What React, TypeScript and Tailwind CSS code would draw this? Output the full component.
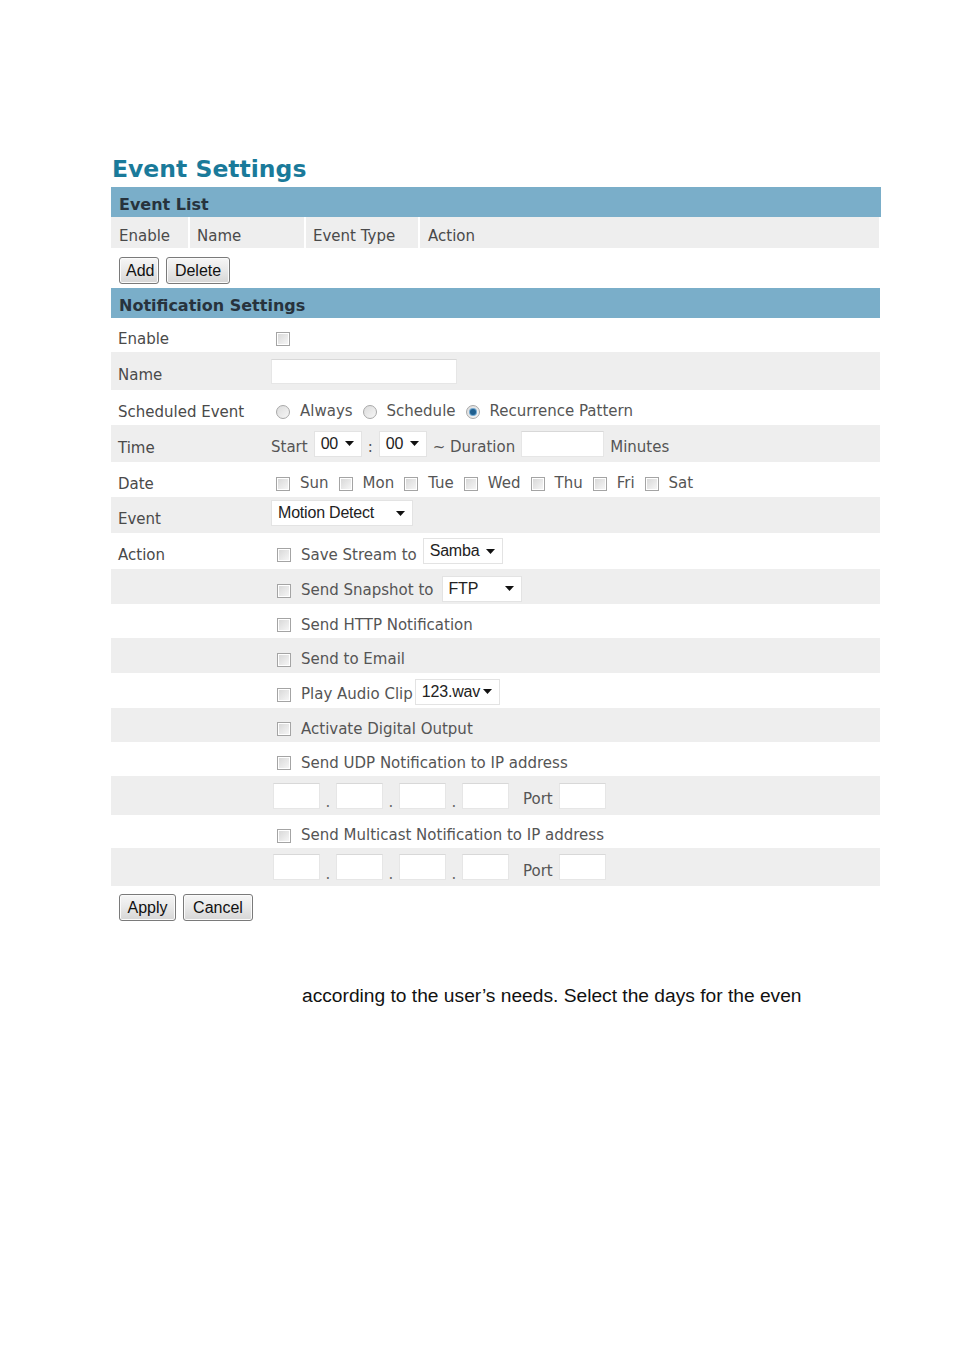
import React from "react"

const ui = "font-['DejaVu_Sans',Verdana,sans-serif]"
const arial = "font-['Liberation_Sans',Arial,sans-serif]"

function Checkbox({ className = "" }: { className?: string }) {
    return (
        <span
            className={`inline-block w-[14px] h-[14px] border border-[#a4a4a4] bg-gradient-to-br from-[#d6d6d6] to-[#f8f8f8] shadow-[inset_0_0_0_1px_#fff] shrink-0 ${className}`}
        />
    )
}

function Radio({ checked = false }: { checked?: boolean }) {
    return (
        <span className="inline-flex items-center justify-center w-[14px] h-[14px] rounded-full border border-[#a8a8a8] bg-gradient-to-br from-[#dcdcdc] to-[#f6f6f6] shrink-0">
            {checked && <span className="w-[6px] h-[6px] rounded-full bg-[#1f5f8f] shadow-[0_0_0_1px_#6fa7d0]" />}
        </span>
    )
}

function Select({ value, width }: { value: string; width: string }) {
    return (
        <span
            className={`inline-flex items-center justify-between h-[26px] pl-[6px] pr-[7px] bg-white border border-[#e3e3e3] ${arial} text-[16px] tracking-[-0.2px] text-[#222] ${width}`}
        >
            <span>{value}</span>
            <svg width="9" height="5" viewBox="0 0 9 5" className="shrink-0">
                <path d="M0 0h9L4.5 5z" fill="#111" />
            </svg>
        </span>
    )
}

function TextBox({ className = "" }: { className?: string }) {
    return <span className={`inline-block bg-white border border-[#e6e6e6] border-t-[#d8d8d8] ${className}`} />
}

function Button({ children, className = "" }: { children: React.ReactNode; className?: string }) {
    return (
        <button
            className={`h-[27px] px-[6px] rounded-[3px] border border-[#7a7a7a] bg-gradient-to-b from-[#f6f6f6] via-[#e8e8e8] to-[#d6d6d6] ${arial} text-[16px] text-[#111] leading-none shadow-[inset_0_0_0_1px_#fbfbfb] ${className}`}
        >
            {children}
        </button>
    )
}

function Row({
    label,
    gray,
    h,
    children,
}: {
    label?: string
    gray?: boolean
    h: string
    children?: React.ReactNode
}) {
    return (
        <div className={`flex items-center ${h} ${gray ? "bg-[#eeeeee]" : "bg-white"}`}>
            <div className="w-[160px] pl-[7px] pt-[9px] text-[#4a4a4a] shrink-0">{label}</div>
            <div className="flex items-center pt-[8px] text-[#555]">{children}</div>
        </div>
    )
}

function IpRow({ h }: { h: string }) {
    return (
        <Row gray h={h}>
            <div className="flex items-center pl-[2px]">
                <TextBox className="w-[47px] h-[26px] -mt-[8px]" />
                <span className="w-[16px] text-center pt-[6px] text-[#666]">.</span>
                <TextBox className="w-[47px] h-[26px] -mt-[8px]" />
                <span className="w-[16px] text-center pt-[6px] text-[#666]">.</span>
                <TextBox className="w-[47px] h-[26px] -mt-[8px]" />
                <span className="w-[16px] text-center pt-[6px] text-[#666]">.</span>
                <TextBox className="w-[47px] h-[26px] -mt-[8px]" />
                <span className="ml-[14px] mr-[6px]">Port</span>
                <TextBox className="w-[47px] h-[26px] -mt-[8px]" />
            </div>
        </Row>
    )
}

function ActionItem({
    text,
    label,
    gray,
    h = "h-[35px]",
    children,
}: {
    text: string
    label?: string
    gray?: boolean
    h?: string
    children?: React.ReactNode
}) {
    return (
        <Row label={label} gray={gray} h={h}>
            <div className="flex items-center pl-[6px]">
                <Checkbox />
                <span className="ml-[10px]">{text}</span>
                {children}
            </div>
        </Row>
    )
}

export default function App() {
    const days = ["Sun", "Mon", "Tue", "Wed", "Thu", "Fri", "Sat"]
    return (
        <div className={`min-h-[1350px] w-[954px] bg-white ${ui} text-[15px]`}>
            <div className="ml-[111px] w-[770px] pt-[154px]">
                {/* Title */}
                <h1 className="h-[33px] pl-[1px] text-[23.5px] font-bold text-[#1a7a9a] leading-[30px]">Event Settings</h1>

                {/* Event List */}
                <div className="h-[30px] bg-[#7aaec9] pl-[8px] flex items-center pt-[5px] text-[16px] font-bold text-[#27333d]">
                    Event List
                </div>
                <div className="flex h-[31px] w-[768px] bg-[#eeeeee] text-[#4a4a4a] pt-[8px]">
                    <div className="w-[77px] pl-[8px] flex items-center">Enable</div>
                    <div className="w-[2px] -mt-[8px] bg-white" />
                    <div className="w-[114px] pl-[7px] flex items-center">Name</div>
                    <div className="w-[2px] -mt-[8px] bg-white" />
                    <div className="w-[112px] pl-[7px] flex items-center">Event Type</div>
                    <div className="w-[2px] -mt-[8px] bg-white" />
                    <div className="flex-1 pl-[8px] flex items-center">Action</div>
                </div>
                <div className="h-[40px] flex items-center gap-[7px] pl-[8px] pt-[5px]">
                    <Button className="w-[40px] px-0">Add</Button>
                    <Button className="w-[64px]">Delete</Button>
                </div>

                {/* Notification Settings */}
                <div className="h-[30px] w-[769px] bg-[#7aaec9] pl-[8px] flex items-center pt-[6px] text-[16px] font-bold text-[#27333d]">
                    Notification Settings
                </div>

                <div className="w-[769px]">
                    <Row label="Enable" h="h-[34px]">
                        <Checkbox className="ml-[5px]" />
                    </Row>
                    <Row label="Name" gray h="h-[38px]">
                        <TextBox className="w-[186px] h-[25px] -mt-[8px]" />
                    </Row>
                    <Row label="Scheduled Event" h="h-[35px]">
                        <div className="flex items-center pl-[5px]">
                            <Radio />
                            <span className="ml-[10px] mr-[10px]">Always</span>
                            <Radio />
                            <span className="ml-[10px] mr-[10px]">Schedule</span>
                            <Radio checked />
                            <span className="ml-[10px]">Recurrence Pattern</span>
                        </div>
                    </Row>
                    <Row label="Time" gray h="h-[37px]">
                        <div className="flex items-center">
                            <span>Start</span>
                            <span className="ml-[6px] -mt-[8px] flex"><Select value="00" width="w-[48px]" /></span>
                            <span className="mx-[6px]">:</span>
                            <span className="-mt-[8px] flex"><Select value="00" width="w-[48px]" /></span>
                            <span className="ml-[6px]">~ Duration</span>
                            <TextBox className="ml-[6px] w-[83px] h-[26px] -mt-[8px]" />
                            <span className="ml-[6px]">Minutes</span>
                        </div>
                    </Row>
                    <Row label="Date" h="h-[35px]">
                        <div className="flex items-center pl-[5px]">
                            {days.map((d) => (
                                <span key={d} className="flex items-center mr-[10px]">
                                    <Checkbox />
                                    <span className="ml-[10px]">{d}</span>
                                </span>
                            ))}
                        </div>
                    </Row>
                    <Row label="Event" gray h="h-[36px]">
                        <span className="-mt-[12px] flex"><Select value="Motion Detect" width="w-[142px]" /></span>
                    </Row>
                    <ActionItem label="Action" text="Save Stream to" h="h-[36px]">
                        <span className="ml-[6px] -mt-[8px] flex"><Select value="Samba" width="w-[80px]" /></span>
                    </ActionItem>
                    <ActionItem text="Send Snapshot to" gray>
                        <span className="ml-[8px] -mt-[4px] flex"><Select value="FTP" width="w-[80px]" /></span>
                    </ActionItem>
                    <ActionItem text="Send HTTP Notification" h="h-[34px]" />
                    <ActionItem text="Send to Email" gray />
                    <ActionItem text="Play Audio Clip">
                        <span className="ml-[2px] -mt-[6px] flex"><Select value="123.wav" width="w-[85px]" /></span>
                    </ActionItem>
                    <ActionItem text="Activate Digital Output" gray h="h-[34px]" />
                    <ActionItem text="Send UDP Notification to IP address" h="h-[34px]" />
                    <IpRow h="h-[39px]" />
                    <ActionItem text="Send Multicast Notification to IP address" h="h-[33px]" />
                    <IpRow h="h-[38px]" />
                </div>

                <div className="flex items-center gap-[7px] pl-[8px] pt-[8px]">
                    <Button className="w-[57px]">Apply</Button>
                    <Button className="w-[70px]">Cancel</Button>
                </div>
            </div>

            <p className={`${arial} text-[19.2px] text-[#111] ml-[302px] mt-[61px]`}>
                according to the user’s needs. Select the days for the even
            </p>
        </div>
    )
}
